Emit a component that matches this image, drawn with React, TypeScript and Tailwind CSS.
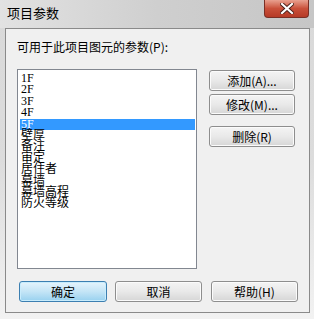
const items = ["1F", "2F", "3F", "4F", "5F", "壁厚", "备注", "审定", "居住者", "幕墙", "幕墙高程", "防火等级"];

function WinButton({ label, primary, className }: { label: string; primary?: boolean; className?: string }) {
  return (
    <button
      className={
        "h-[21px] rounded-[3px] border text-[12px] leading-none text-black " +
        (primary
          ? "border-[#3c7fb1] bg-gradient-to-b from-[#e5f4fc] via-[#c4e5f6] to-[#98d1ef] shadow-[inset_0_0_0_1px_#c8ecfc] "
          : "border-[#8e8e8e] bg-gradient-to-b from-[#f4f4f4] via-[#e9e9e9] to-[#d6d6d6] shadow-[inset_0_0_0_1px_#fbfbfb] ") +
        (className ?? "")
      }
    >
      {label}
    </button>
  );
}

export default function App() {
  return (
    <div className="flex h-[319px] w-[314px] flex-col bg-gradient-to-b from-[#d9d9d9] via-[#dcdcdc] to-[#f2f2f2] font-['Noto_Sans_CJK_SC',sans-serif]">
      {/* title bar */}
      <div className="flex h-[28px] items-start justify-between bg-gradient-to-r from-[#e2e2e2] via-[#cfcfcf] to-[#c6c6c6]">
        <span className="ml-[7px] mt-[6px] text-[13px] leading-[14px] text-black">项目参数</span>
        <div className="mr-[5px] flex h-[18px] w-[45px] items-center justify-center rounded-b-[4px] border border-t-0 border-[#7a2f25] bg-gradient-to-b from-[#e8a08f] via-[#c9503a] to-[#b63a26]">
          <svg width="14" height="11" viewBox="0 0 14 11">
            <path d="M2 1 L12 10 M12 1 L2 10" stroke="#4a1f18" strokeWidth="4" strokeLinecap="square" />
            <path d="M2 1 L12 10 M12 1 L2 10" stroke="#ffffff" strokeWidth="2.2" strokeLinecap="square" />
          </svg>
        </div>
      </div>

      {/* client panel */}
      <div className="mx-[5px] flex h-[285px] w-[305px] flex-col border border-[#8a8a8a] bg-[#f0f0f0] pl-[11px] pt-[11px]">
        <div className="h-[14px] text-[12px] leading-[14px] text-black">可用于此项目图元的参数(P):</div>

        <div className="mt-[15px] flex">
          <div className="h-[200px] w-[180px] border border-[#828790] bg-white pt-[3px] font-['Liberation_Serif','Noto_Sans_CJK_SC',serif] text-[12px] leading-[11.4px] text-black">
            {items.map((it) => (
              <div
                key={it}
                className={
                  it === "5F"
                    ? "ml-[2px] mr-[1px] h-[11.4px] bg-[#3399ff] pl-[1px] text-white"
                    : "h-[11.4px] pl-[3px]"
                }
              >
                {it}
              </div>
            ))}
          </div>

          <div className="ml-[12px] mt-[1px] flex flex-col">
            <WinButton label="添加(A)..." className="h-[20px] w-[86px]" />
            <WinButton label="修改(M)..." className="mt-[3px] h-[20px] w-[86px]" />
            <WinButton label="删除(R)" className="mt-[11px] h-[20px] w-[86px]" />
          </div>
        </div>

        <div className="ml-[2px] mt-[12px] flex">
          <WinButton label="确定" primary className="w-[88px]" />
          <WinButton label="取消" className="ml-[8px] w-[87px]" />
          <WinButton label="帮助(H)" className="ml-[9px] w-[87px]" />
        </div>
      </div>
    </div>
  );
}
